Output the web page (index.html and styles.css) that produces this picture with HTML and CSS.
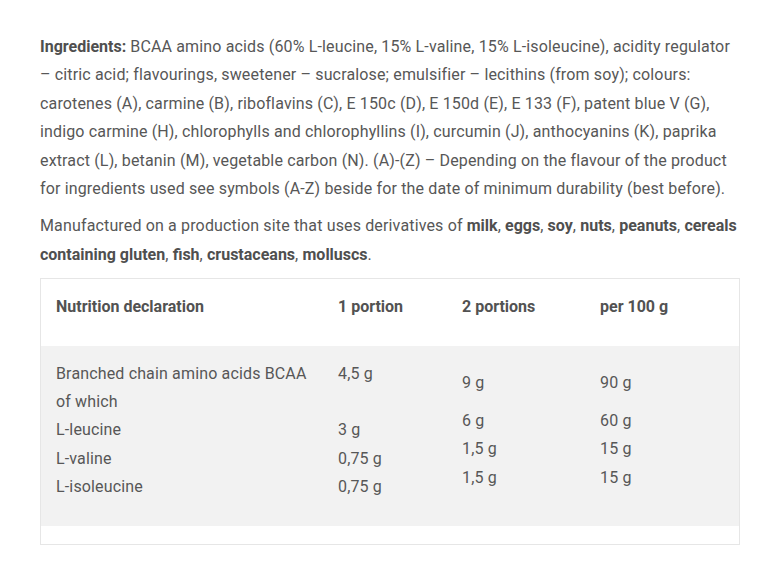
FILE: index.html
```html
<!DOCTYPE html>
<html>
<head>
<meta charset="utf-8">
<link rel="stylesheet" href="styles.css">
</head>
<body>
<div class="page">
  <p class="para para-narrow"><strong>Ingredients:</strong> BCAA amino acids (60% L-leucine, 15% L-valine, 15% L-isoleucine), acidity regulator – citric acid; flavourings, sweetener – sucralose; emulsifier – lecithins (from soy); colours: carotenes (A), carmine (B), riboflavins (C), E 150c (D), E 150d (E), E 133 (F), patent blue V (G), indigo carmine (H), chlorophylls and chlorophyllins (I), curcumin (J), anthocyanins (K), paprika extract (L), betanin (M), vegetable carbon (N). (A)-(Z) – Depending on the flavour of the product for ingredients used see symbols (A-Z) beside for the date of minimum durability (best before).</p>
  <p class="para">Manufactured on a production site that uses derivatives of <strong>milk</strong>, <strong>eggs</strong>, <strong>soy</strong>, <strong>nuts</strong>, <strong>peanuts</strong>, <strong>cereals containing gluten</strong>, <strong>fish</strong>, <strong>crustaceans</strong>, <strong>molluscs</strong>.</p>
  <div class="table-box">
    <table class="nutri">
      <colgroup>
        <col class="c1"><col class="c2"><col class="c3"><col class="c4">
      </colgroup>
      <thead>
        <tr>
          <th>Nutrition declaration</th>
          <th>1 portion</th>
          <th>2 portions</th>
          <th>per 100 g</th>
        </tr>
      </thead>
      <tbody>
        <tr>
          <td>Branched chain amino acids BCAA<br>of which<br>L-leucine<br>L-valine<br>L-isoleucine</td>
          <td>4,5 g<br>&nbsp;<br>3 g<br>0,75 g<br>0,75 g</td>
          <td class="mid"><div class="gap">9 g</div><div>6 g<br>1,5 g<br>1,5 g</div></td>
          <td class="mid"><div class="gap">90 g</div><div>60 g<br>15 g<br>15 g</div></td>
        </tr>
      </tbody>
    </table>
  </div>
</div>
</body>
</html>
```
FILE: styles.css
```css
html, body {
  margin: 0;
  padding: 0;
  background: #ffffff;
}
body {
  font-family: Roboto, "Liberation Sans", sans-serif;
  font-size: 16px;
  line-height: 28.4px;
  color: #575757;
  letter-spacing: 0.15px;
}
.page {
  padding: 33px 40px 0 40px;
  width: 700px;
}
.para {
  margin: 0 0 9px 0;
}
.para-narrow {
  padding-right: 5px;
}
.para strong {
  font-weight: 700;
  color: #4f4f4f;
  letter-spacing: 0;
}
.table-box {
  border: 1px solid #e6e6e6;
  padding-bottom: 18px;
}
.nutri {
  width: 100%;
  border-collapse: collapse;
  table-layout: fixed;
}
.c1 { width: 282px; }
.c2 { width: 124px; }
.c3 { width: 138px; }
.c4 { width: 154px; }
.nutri th {
  text-align: left;
  font-weight: 700;
  letter-spacing: 0;
  color: #525252;
  padding: 14px 15px 24px 15px;
  background: #ffffff;
  vertical-align: top;
}
.nutri td {
  padding: 14px 15px 24px 15px;
  background: #f2f2f2;
  vertical-align: top;
}
.nutri td.mid {
  vertical-align: middle;
}
.gap {
  margin-bottom: 9.6px;
}
```
